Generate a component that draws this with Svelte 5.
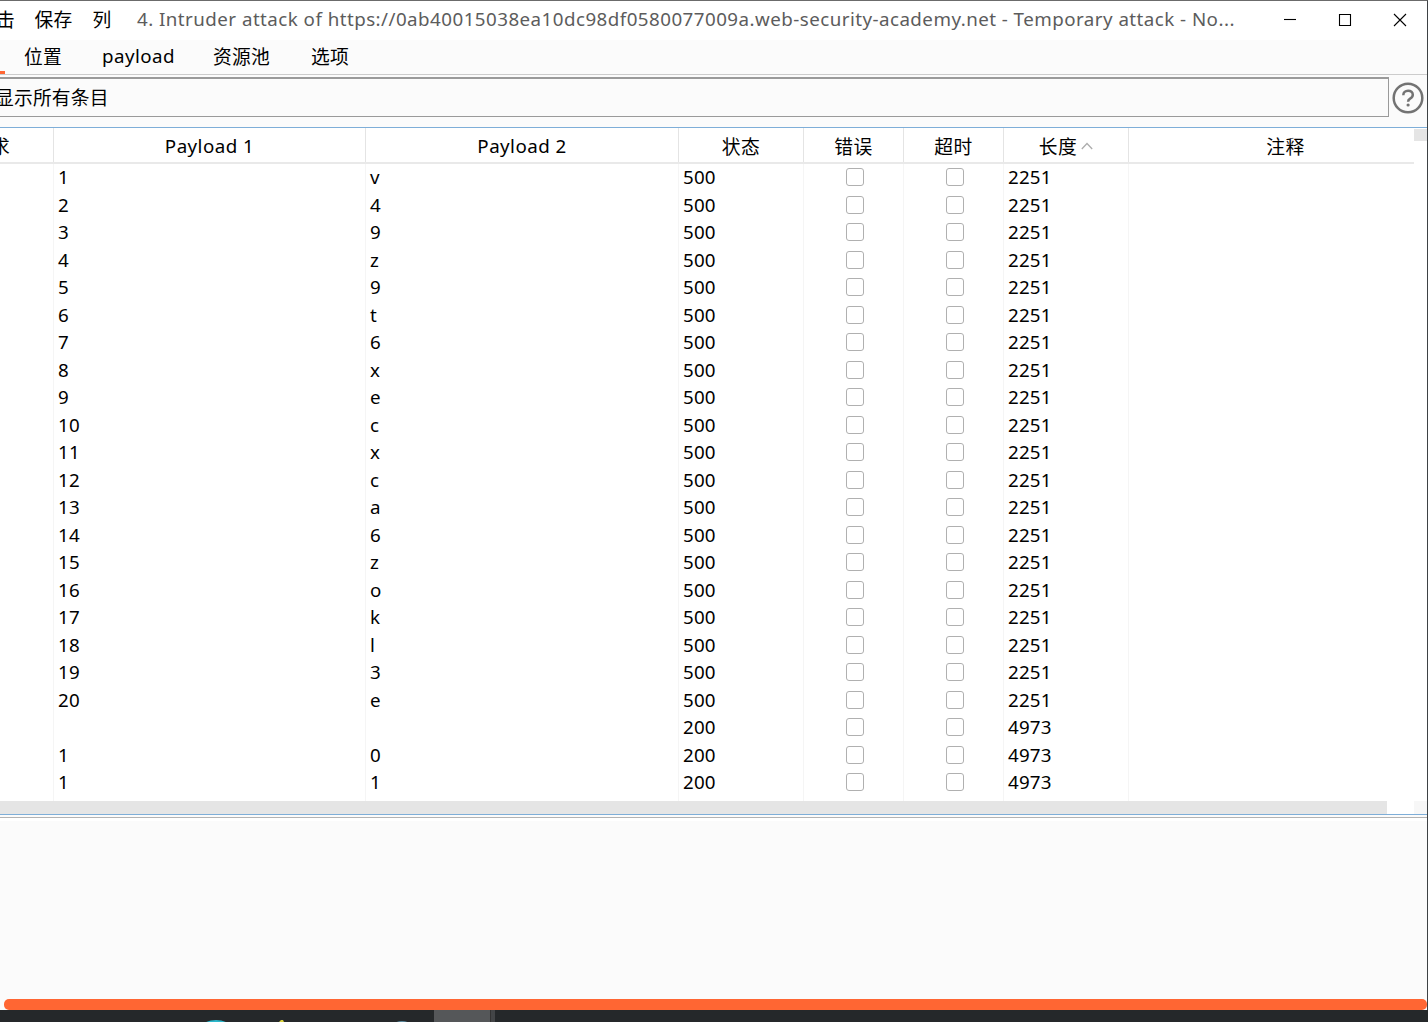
<script>
  const values = ['v', '4', '9', 'z', '9', 't', '6', 'x', 'e', 'c', 'x', 'c', 'a', '6', 'z', 'o', 'k', 'l', '3', 'e'];
  const rows = [
    ...values.map((p2, i) => ({ p1: String(i + 1), p2, status: 500, length: 2251 })),
    { p1: '', p2: '', status: 200, length: 4973 },
    { p1: '1', p2: '0', status: 200, length: 4973 },
    { p1: '1', p2: '1', status: 200, length: 4973 },
  ];
</script>

<div class="screen">
  <div class="window">
    <header class="titlebar">
      <span class="menu first">击</span>
      <span class="menu save">保存</span>
      <span class="menu col">列</span>
      <span class="title">4. Intruder attack of https://0ab40015038ea10dc98df0580077009a.web-security-academy.net - Temporary attack - No...</span>
      <div class="controls">
        <svg width="55" height="39" viewBox="0 0 55 39"><path d="M22 18.5h12" /></svg>
        <svg width="55" height="39" viewBox="0 0 55 39"><path d="M22.5 13.5h11v11h-11z" /></svg>
        <svg width="55" height="39" viewBox="0 0 55 39"><path d="M22 13l12 12M34 13l-12 12" /></svg>
      </div>
    </header>

    <nav class="tabs">
      <span class="marker"></span>
      <span class="tab pos">位置</span>
      <span class="tab pay">payload</span>
      <span class="tab pool">资源池</span>
      <span class="tab">选项</span>
    </nav>

    <div class="filter">
      <div class="field">显示所有条目</div>
      <svg class="help" width="32" height="32" viewBox="0 0 32 32">
        <circle cx="16" cy="16" r="14.3" />
        <path d="M11.3 13.2c0-2.7 2-4.5 4.8-4.5 2.7 0 4.7 1.6 4.7 4 0 2-1 3-2.7 3.9-1.4.8-2 1.4-2 3.1" />
        <circle class="dot" cx="16.1" cy="23" r="1.6" />
      </svg>
    </div>

    <section class="table">
      <div class="grid head">
        <span class="cut">求</span>
        <span>Payload 1</span>
        <span>Payload 2</span>
        <span class="zh">状态</span>
        <span class="zh">错误</span>
        <span class="zh">超时</span>
        <span class="zh sorted">长度<svg width="12" height="8" viewBox="0 0 12 8"><path d="M.8 7L6 1.5 11.2 7" /></svg></span>
        <span class="zh note">注释</span>
      </div>
      <div class="body">
        {#each rows as row}
          <div class="grid row">
            <span></span>
            <span>{row.p1}</span>
            <span>{row.p2}</span>
            <span>{row.status}</span>
            <span class="check"><i></i></span>
            <span class="check"><i></i></span>
            <span>{row.length}</span>
            <span></span>
          </div>
        {/each}
        <div class="grid row rest">
          {#each Array(8) as _}<span></span>{/each}
        </div>
      </div>
      <div class="hscroll"><div class="thumb"></div><div class="corner"></div></div>
      <div class="vthumb"></div>
    </section>

    <div class="divider"></div>
    <div class="pane"></div>
    <div class="progress"><div class="bar"></div></div>
  </div>

  <footer class="taskbar">
    <svg width="434" height="12" viewBox="0 0 434 12">
      <ellipse cx="216" cy="17" rx="14" ry="7" fill="#2bb8cc" />
      <path d="M279 12l2-2h2l1 2z" fill="#d9d23c" />
      <ellipse cx="402" cy="16" rx="9" ry="5" fill="#5d8ea3" />
    </svg>
    <div class="active"></div>
    <div class="stack"></div>
  </footer>
</div>

<style>
  :global(body) {
    margin: 0;
  }
  .screen {
    width: 1428px;
    height: 1022px;
    overflow: hidden;
    background: #25282a;
    display: flex;
    flex-direction: column;
    font-family: 'Noto Sans', 'Noto Sans CJK SC', sans-serif;
    font-size: 18.75px;
    letter-spacing: 0.2px;
    color: #000;
    white-space: nowrap;
  }
  .window {
    box-sizing: border-box;
    height: 1010px;
    border-top: 1px solid #6b6b6b;
    border-right: 1px solid #3e4245;
    background: #fbfbfb;
    display: flex;
    flex-direction: column;
  }
  .titlebar {
    height: 39px;
    flex: none;
    background: #fff;
    display: flex;
    align-items: flex-start;
    line-height: 35px;
  }
  .menu {
    flex: none;
    line-height: 37px;
  }
  .first {
    width: 38.5px;
    margin-left: -4px;
  }
  .save {
    width: 58px;
  }
  .col {
    width: 44.5px;
  }
  .title {
    flex: 1;
    color: #5c5c5c;
    letter-spacing: 0.46px;
  }
  .controls {
    display: flex;
    width: 165px;
    flex: none;
  }
  .controls path {
    fill: none;
    stroke: #000;
    stroke-width: 1.1;
  }
  .tabs {
    height: 34px;
    flex: none;
    border-bottom: 1px solid #ccc;
    display: flex;
    line-height: 33px;
    letter-spacing: 0.3px;
  }
  .marker {
    width: 5px;
    height: 3px;
    margin: 31px 19px 0 0;
    background: #ff6633;
  }
  .pos {
    width: 78px;
  }
  .pay {
    width: 111px;
    line-height: 31px;
    letter-spacing: 0.45px;
  }
  .pool {
    width: 98px;
  }
  .filter {
    height: 40px;
    flex: none;
    padding: 2px 0 10px;
    display: flex;
    align-items: center;
  }
  .field {
    box-sizing: border-box;
    width: 1389px;
    height: 40px;
    line-height: 38px;
    border: 1px solid #9a9a9a;
    border-width: 2px 1px 1px 0;
    overflow: hidden;
    text-indent: -5px;
  }
  .help {
    margin: 2px 0 0 3px;
    fill: none;
    stroke: #737373;
    stroke-width: 2.5;
  }
  .dot {
    fill: #737373;
    stroke: none;
  }
  .table {
    position: relative;
    box-sizing: border-box;
    height: 688px;
    flex: none;
    background: #fff;
    border: 1px solid #7eaed8;
    border-width: 1px 0;
    display: flex;
    flex-direction: column;
  }
  .grid {
    display: grid;
    grid-template-columns: 54px 312px 313px 125px 100px 100px 125px 286px;
    width: 1415px;
  }
  .grid > span {
    box-sizing: border-box;
    border-right: 1px solid #f5f5f5;
  }
  .head {
    height: 34px;
    flex: none;
    width: 1414px;
    border-bottom: 2px solid #e9e9e9;
    letter-spacing: 0.45px;
  }
  .head > span {
    height: 34px;
    border-right-color: #e4e4e4;
    line-height: 36px;
    text-align: center;
  }
  .head > .zh,
  .head > .cut {
    line-height: 38px;
  }
  .grid > span:last-child {
    border-right: 0;
  }
  .head > .cut {
    text-align: left;
    text-indent: -9px;
  }
  .head > .note {
    padding-left: 27px;
  }
  .sorted svg {
    margin-left: 4px;
    vertical-align: 4px;
    fill: none;
    stroke: #adadad;
    stroke-width: 1.3;
  }
  .body {
    flex: 1;
    overflow: hidden;
    display: flex;
    flex-direction: column;
  }
  .row {
    height: 27.5px;
    flex: none;
    line-height: 25px;
  }
  .row > span {
    padding-left: 4px;
  }
  .row > .check {
    padding: 4.1px 0 0 3px;
    display: flex;
    justify-content: center;
  }
  .check i {
    box-sizing: border-box;
    width: 18px;
    height: 18px;
    border: 1.5px solid #b0b0b0;
    border-radius: 3px;
  }
  .hscroll {
    height: 13px;
    flex: none;
    display: flex;
    justify-content: space-between;
  }
  .thumb {
    width: 1387px;
    background: #e5e5e5;
  }
  .corner {
    width: 13px;
    background: #f7f7f7;
  }
  .vthumb {
    position: absolute;
    top: 1px;
    right: 0;
    width: 13px;
    height: 12px;
    background: #e5e5e5;
  }
  .divider {
    height: 3px;
    flex: none;
    margin-top: 2px;
    border-top: 1px solid #b3b3b3;
    background: #fff;
  }
  .pane {
    flex: 1;
  }
  .progress {
    height: 11px;
    flex: none;
    padding-left: 4px;
  }
  .bar {
    height: 11px;
    border-radius: 5px;
    background: #ff6633;
  }
  .taskbar {
    height: 12px;
    display: flex;
  }
  .active {
    width: 56px;
    background: #555759;
  }
  .stack {
    width: 4px;
    border-left: 1px solid #333;
    background: #434547;
  }
</style>
